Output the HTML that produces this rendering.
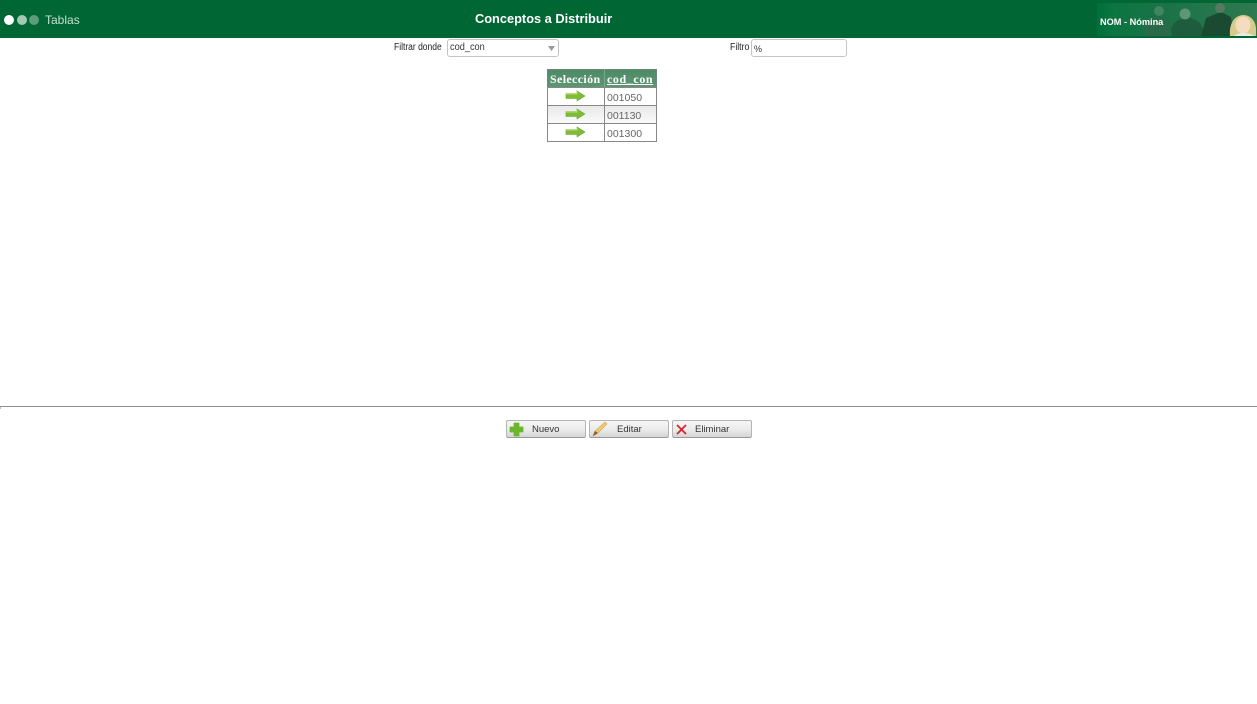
<!DOCTYPE html>
<html lang="es"><head><meta charset="utf-8"><title>Conceptos a Distribuir</title>
<style>
html,body{margin:0;padding:0;background:#fff;width:1257px;height:704px;overflow:hidden;font-family:"Liberation Sans",sans-serif}
.a{position:absolute;white-space:nowrap}
.lab{font-size:10px;color:#222;line-height:12px}
.box{background:#fff;border:1px solid #c4c4c4;border-radius:3px;box-sizing:border-box}
.btn{position:absolute;top:420px;width:80px;height:18px;box-sizing:border-box;border:1px solid #b4b4b4;border-bottom-color:#999;border-radius:2px;background:linear-gradient(#f6f6f6,#ececec 50%,#d4d4d4);font-size:9.5px;color:#333;line-height:18px}
.cell{position:absolute;box-sizing:border-box}
</style></head><body>
<div class="a" style="left:0;top:0;width:1257px;height:38px;background:#006633"></div>
<svg class="a" style="left:1097px;top:3px" width="160" height="33" viewBox="0 0 160 33">
<defs><linearGradient id="f" x1="0" x2="1"><stop offset="0" stop-color="#006f3b"/><stop offset=".1" stop-color="#0b7540"/><stop offset=".4" stop-color="#1a7247"/><stop offset="1" stop-color="#2f7a50"/></linearGradient></defs>
<rect width="160" height="33" fill="url(#f)"/>
<ellipse cx="60" cy="26" rx="13" ry="12" fill="#2a6a48"/><circle cx="62" cy="8" r="5" fill="#3f8560"/>
<ellipse cx="90" cy="28" rx="16" ry="13" fill="#1d5c3c"/><circle cx="88" cy="11" r="5.5" fill="#5f9673"/>
<path d="M104 33 L109 15 L124 9 L134 14 L136 33Z" fill="#1a4a32"/><circle cx="123" cy="5" r="5" fill="#557a5f"/>
<path d="M133 33 C132 22 136 13 146 12 C155 12 159 20 159 26 L159 33Z" fill="#d9cb8a"/>
<ellipse cx="146" cy="22" rx="7.5" ry="8.5" fill="#f4dcc0"/><path d="M137 33 C141 29 152 29 157 33Z" fill="#e9ece4"/>
</svg>
<div class="a" style="left:4px;top:15px;width:10px;height:10px;border-radius:50%;background:#fff"></div>
<div class="a" style="left:17px;top:15px;width:10px;height:10px;border-radius:50%;background:#a3c9b2"></div>
<div class="a" style="left:29px;top:15px;width:10px;height:10px;border-radius:50%;background:#5c9e7c"></div>
<div class="a" style="left:45px;top:13px;font-size:12px;line-height:14px;color:#c4e0cf">Tablas</div>
<div class="a" style="left:475px;top:11px;font-size:12.8px;line-height:16px;font-weight:bold;color:#fff">Conceptos a Distribuir</div>
<div class="a" style="left:1100px;top:16px;font-size:9.2px;line-height:12px;font-weight:bold;color:#fff">NOM - Nómina</div>

<div class="a lab" style="left:394px;top:42px;transform-origin:0 0;transform:scaleX(.85)">Filtrar donde</div>
<div class="a box" style="left:447px;top:39px;width:112px;height:18px"></div>
<div class="a lab" style="left:450px;top:42px;color:#333;transform-origin:0 0;transform:scaleX(.92)">cod_con</div>
<svg class="a" style="left:548px;top:46px" width="7" height="5"><path d="M0 0H7L3.5 5Z" fill="#999"/></svg>
<div class="a lab" style="left:730px;top:42px;transform-origin:0 0;transform:scaleX(.87)">Filtro</div>
<div class="a box" style="left:751px;top:39px;width:96px;height:18px"></div>
<div class="a lab" style="left:754px;top:43px;font-size:9px;color:#333">%</div>

<div class="cell" style="left:547px;top:69px;width:110px;height:19px;background:linear-gradient(#4e8a65,#5c9673);border:1px solid #6a8a76"></div>
<div class="a" style="left:604px;top:69px;width:1px;height:19px;background:#7ea68d"></div>
<div class="a" style="left:550px;top:72px;font:bold 12px/14px 'Liberation Serif',serif;color:#fff;letter-spacing:.35px">Selección</div>
<div class="a" style="left:607px;top:72px;font:bold 12px/14px 'Liberation Serif',serif;color:#fff;text-decoration:underline;letter-spacing:.6px">cod_con</div>
<div class="cell" style="left:547px;top:87px;width:110px;height:55px;border:1px solid #888"></div>
<div class="cell" style="left:548px;top:106px;width:108px;height:17px;background:linear-gradient(#e9e9e9,#f9f9f9)"></div>
<div class="a" style="left:547px;top:105px;width:110px;height:1px;background:#888"></div>
<div class="a" style="left:547px;top:123px;width:110px;height:1px;background:#888"></div>
<div class="a" style="left:604px;top:87px;width:1px;height:55px;background:#888"></div>
<div class="a" style="left:607px;top:92px;font-size:10.5px;line-height:13px;color:#666">001050</div>
<div class="a" style="left:607px;top:110px;font-size:10.5px;line-height:13px;color:#666">001130</div>
<div class="a" style="left:607px;top:128px;font-size:10.5px;line-height:13px;color:#666">001300</div>
<svg class="a" style="left:565px;top:90px" width="21" height="12"><path d="M1 3.5H12V1L20 6L12 11V8.5H1Z" fill="#7fbb35" stroke="#6aa52c" stroke-width=".6"/><path d="M1 4H12V2" fill="none" stroke="#b5de78"/></svg>
<svg class="a" style="left:565px;top:108px" width="21" height="12"><path d="M1 3.5H12V1L20 6L12 11V8.5H1Z" fill="#7fbb35" stroke="#6aa52c" stroke-width=".6"/><path d="M1 4H12V2" fill="none" stroke="#b5de78"/></svg>
<svg class="a" style="left:565px;top:126px" width="21" height="12"><path d="M1 3.5H12V1L20 6L12 11V8.5H1Z" fill="#7fbb35" stroke="#6aa52c" stroke-width=".6"/><path d="M1 4H12V2" fill="none" stroke="#b5de78"/></svg>

<div class="a" style="left:0;top:406px;width:1257px;height:1px;background:#8e8e8e"></div>
<div class="a" style="left:0;top:407px;width:1px;height:2px;background:#bbb"></div>

<div class="btn" style="left:506px"><span class="a" style="left:25px;top:0">Nuevo</span>
<svg class="a" style="left:2px;top:1px" width="15" height="15"><path d="M5 1H10V5H14V10H10V14H5V10H1V5H5Z" fill="#6cb62e" stroke="#6cb62e" stroke-width=".8" stroke-linejoin="round"/></svg></div>
<div class="btn" style="left:589px"><span class="a" style="left:27px;top:0">Editar</span>
<svg class="a" style="left:1px;top:0" width="18" height="16"><path d="M2 15L4 10L14 1L16 3L7 12Z" fill="#f0c878" stroke="#dca648" stroke-width=".6"/><path d="M2 15L4 10L7 12Z" fill="#8a5a2a"/></svg></div>
<div class="btn" style="left:672px"><span class="a" style="left:22px;top:0">Eliminar</span>
<svg class="a" style="left:2px;top:2px" width="13" height="13"><path d="M2 2L11 11M11 2L2 11" stroke="#d9262a" stroke-width="1.8" fill="none"/></svg></div>
</body></html>
